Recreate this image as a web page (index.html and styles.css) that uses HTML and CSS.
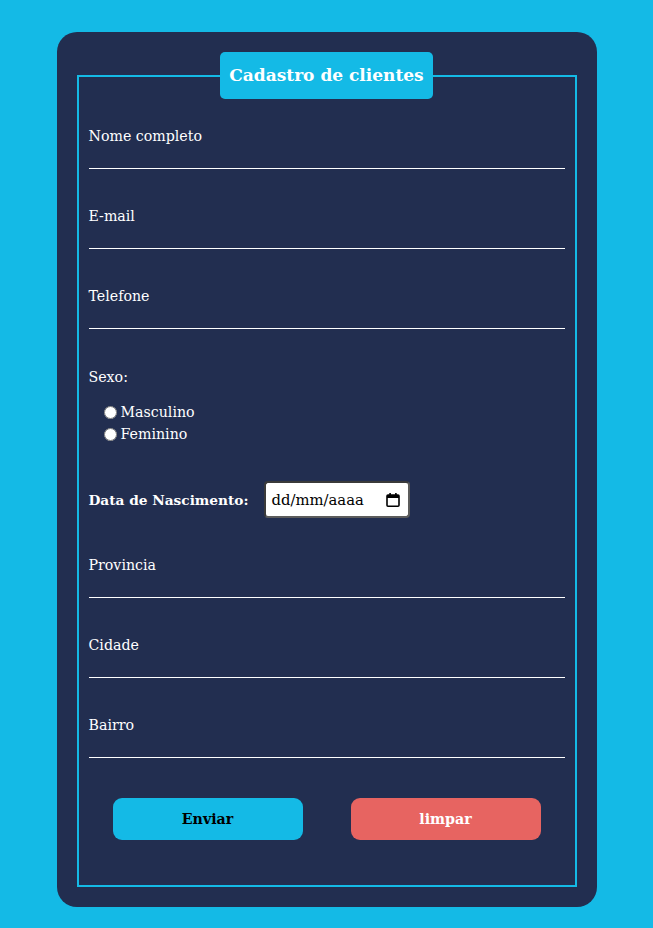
FILE: index.html
```html
<!DOCTYPE html>
<html lang="pt">
<head>
<meta charset="utf-8">
<title>Cadastro de clientes</title>
<link rel="stylesheet" href="styles.css">
</head>
<body>
<form class="card">
  <fieldset class="box">
    <legend class="title">Cadastro de clientes</legend>
    <div class="field"><label class="field-label">Nome completo</label><div class="field-input"></div></div>
    <div class="field"><label class="field-label">E-mail</label><div class="field-input"></div></div>
    <div class="field"><label class="field-label">Telefone</label><div class="field-input"></div></div>
    <div class="sexo">
      <div class="field-label">Sexo:</div>
      <div class="radios">
        <label class="radio-row"><input type="radio" name="sexo"> Masculino</label>
        <label class="radio-row"><input type="radio" name="sexo"> Feminino</label>
      </div>
    </div>
    <div class="date-row">
      <label class="date-label">Data de Nascimento:</label>
      <div class="date-input">
        <span class="date-text">dd/mm/aaaa</span>
        <svg class="date-icon" width="14" height="14" viewBox="0 0 14 14" aria-hidden="true">
          <rect x="1" y="2" width="12" height="11.2" rx="1" fill="none" stroke="#000" stroke-width="1.6"/>
          <rect x="1" y="2" width="12" height="3" fill="#000"/>
          <rect x="3.3" y="0" width="1.6" height="3" fill="#000"/>
          <rect x="9.1" y="0" width="1.6" height="3" fill="#000"/>
        </svg>
      </div>
    </div>
    <div class="field"><label class="field-label">Provincia</label><div class="field-input"></div></div>
    <div class="field"><label class="field-label">Cidade</label><div class="field-input"></div></div>
    <div class="field"><label class="field-label">Bairro</label><div class="field-input"></div></div>
    <div class="actions">
      <button type="button" class="btn btn-send">Enviar</button>
      <button type="button" class="btn btn-clear">limpar</button>
    </div>
  </fieldset>
</form>
</body>
</html>
```
FILE: styles.css
```css
html, body {
  margin: 0;
  padding: 0;
}
body {
  background: #14bae6;
  font-family: "DejaVu Serif", "Liberation Serif", serif;
  font-size: 14.2px;
  color: #ffffff;
  padding-top: 32px;
  padding-bottom: 21px;
}
.card {
  display: block;
  width: 540px;
  box-sizing: border-box;
  margin: 0 auto;
  background: #222e50;
  border-radius: 20px;
  padding: 20px;
}
.box {
  margin: 0;
  border: 2px solid #14bae6;
  padding: 0 10px 45px 10px;
  min-width: 0;
}
.title {
  margin: 0 auto;
  background: #14bae6;
  border-radius: 5px;
  height: 47px;
  line-height: 47px;
  padding: 0 9px;
  font-size: 17px;
  font-weight: bold;
  color: #ffffff;
  box-sizing: border-box;
}
.field {
  padding-top: 26px;
  border-bottom: 1px solid #ffffff;
}
.field + .field,
.date-row + .field {
  margin-top: 10px;
}
.field-label {
  display: block;
  line-height: 22px;
  height: 22px;
}
.field-input {
  height: 21px;
}
.sexo {
  margin-top: 10px;
  padding-top: 27px;
}
.radios {
  margin-top: 13px;
  padding-left: 10px;
}
.radio-row {
  display: flex;
  align-items: center;
  height: 22px;
  line-height: 22px;
}
.radio-row input {
  margin: 0 4px 0 5px;
  width: 13px;
  height: 13px;
}
.date-row {
  margin-top: 36px;
  display: flex;
  align-items: center;
  height: 37px;
}
.date-label {
  font-weight: bold;
  font-size: 13.7px;
  margin-right: 15px;
}
.date-input {
  box-sizing: border-box;
  width: 146px;
  height: 37px;
  display: flex;
  align-items: center;
  justify-content: space-between;
  background: #ffffff;
  color: #000;
  border: 2px solid #5c5c5c;
  border-top-color: #3a3a3a;
  border-left-color: #3a3a3a;
  border-radius: 4px;
  padding: 0 8px 0 6px;
}
.date-text {
  font-family: "DejaVu Serif", "Liberation Serif", serif;
  font-size: 14.8px;
  color: #000;
}
.date-icon {
  display: block;
}
.actions {
  margin-top: 40px;
  display: flex;
  justify-content: space-around;
}
.btn {
  width: 190px;
  height: 42px;
  border: none;
  border-radius: 9px;
  font-family: "DejaVu Serif", "Liberation Serif", serif;
  font-size: 14.2px;
  font-weight: bold;
}
.btn-send {
  background: #14bae6;
  color: #000000;
}
.btn-clear {
  background: #e76461;
  color: #ffffff;
}
```
